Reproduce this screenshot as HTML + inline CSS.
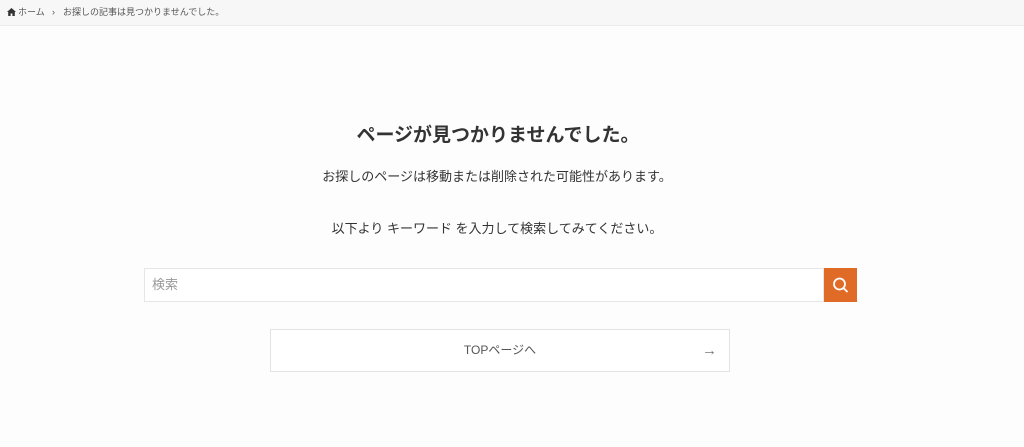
<!DOCTYPE html>
<html><head><meta charset="utf-8"><style>
body{margin:0;width:1024px;height:447px;background:#fdfdfd;font-family:"Liberation Sans","Noto Sans CJK JP",sans-serif;color:#333;position:relative;overflow:hidden}
.bc{position:absolute;left:0;top:0;width:1024px;height:25px;background:#f7f7f7;border-bottom:1px solid #ececec;font-size:9px;color:#555;line-height:24px}
.bc span{position:absolute;top:0}
.t{position:absolute;left:0;width:994px;text-align:center}
.s{position:absolute;left:144px;top:268px;width:680px;height:34px;border:1px solid #e6e6e6;background:#fff;box-sizing:border-box;font-size:13px;color:#999;line-height:32px;padding-left:7px}
.b{position:absolute;left:824px;top:268px;width:33px;height:34px;background:#e06b27}
.top{position:absolute;left:270px;top:329px;width:460px;height:43px;border:1px solid #e3e3e3;box-sizing:border-box;background:#fff;font-size:12px;color:#555;text-align:center;line-height:41px}
</style></head><body>
<div class="bc"><svg style="position:absolute;left:7px;top:8px" width="9" height="8" viewBox="0 0 9 8"><path d="M4.5 0L0 4h1.2v4h2.4V5.5h1.8V8h2.4V4H9z" fill="#333"/></svg><span style="left:18px">ホーム</span><span style="left:52px">›</span><span style="left:63px">お探しの記事は見つかりませんでした。</span></div>
<div class="t" style="top:120px;width:996px;font-size:19px;font-weight:bold;color:#333">ページが見つかりませんでした。</div>
<div class="t" style="top:166px;font-size:13px">お探しのページは移動または削除された可能性があります。</div>
<div class="t" style="top:218px;font-size:13px">以下より キーワード を入力して検索してみてください。</div>
<div class="s">検索</div>
<div class="b"><svg width="33" height="34" viewBox="0 0 33 34"><circle cx="15.5" cy="16" r="5.5" fill="none" stroke="#fff" stroke-width="1.8"/><path d="M19.5 20l4 4" stroke="#fff" stroke-width="1.8"/></svg></div>
<div class="top">TOPページへ<span style="position:absolute;right:12px;top:0;color:#777;font-size:15px">→</span></div>
</body></html>
